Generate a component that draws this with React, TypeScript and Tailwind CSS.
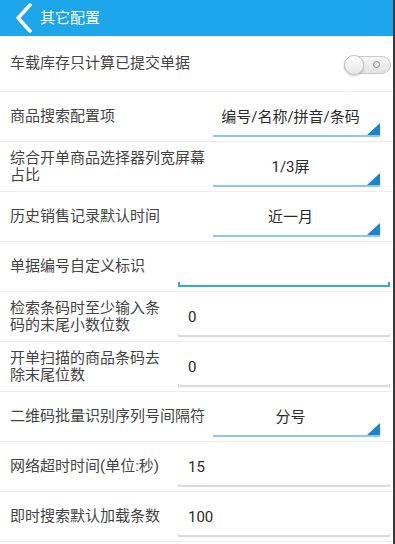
import React from 'react';

const SpinnerRow = ({ label, value }: { label: string; value: string }) => (
  <div className="flex h-[50px] border-b border-[#ececec]">
    <div className="flex w-[213px] items-center pl-[10px] pr-[8px] leading-[17px]">{label}</div>
    <div className="relative flex h-[45px] w-[167px] flex-col border-b-2 border-[#8ccaec]">
      <div className="pr-[12px] pt-[16px] text-center leading-[18px] text-[#2a2a2a]">{value}</div>
      <svg className="absolute bottom-0 right-0" width="13" height="12" viewBox="0 0 13 12">
        <polygon points="13,0 13,12 0,12" fill="#1b84cf" />
      </svg>
    </div>
  </div>
);

const EditRow = ({ label, value, focused }: { label: string; value: string; focused?: boolean }) => (
  <div className="flex h-[50px] border-b border-[#ececec]">
    <div className="flex w-[170px] items-center pl-[10px] leading-[17px]">{label}</div>
    <div className="ml-[8px] flex h-[45px] w-[212px] flex-col">
      <div className="flex-1 pl-[10px] pt-[16px] leading-[18px] text-[#2a2a2a]">{value}</div>
      {focused ? (
        <div className="h-[5px] border-x-2 border-b-2 border-[#35a9da]"></div>
      ) : (
        <div className="h-[3px] border-x border-b-2 border-[#dadada]"></div>
      )}
    </div>
  </div>
);

export default function App() {
  return (
    <div className="h-[544px] w-full overflow-hidden border-r-2 border-[#3a3a3a] bg-white font-['Roboto','Noto_Sans_CJK_SC',sans-serif] text-[15px] text-[#444]">
      {/* Header */}
      <div className="flex h-9 items-center bg-[#1ea6ea]">
        <svg className="ml-[15px]" width="18" height="30" viewBox="0 0 18 30">
          <polyline points="15,2 3,15 15,28" fill="none" stroke="#fff" strokeWidth="3.5" strokeLinecap="round" strokeLinejoin="round" />
        </svg>
        <span className="ml-[7px] text-white">其它配置</span>
      </div>

      {/* Toggle row */}
      <div className="flex h-[56px] items-center justify-between border-b border-[#ececec] pl-[10px] pr-[2px]">
        <span>车载库存只计算已提交单据</span>
        <div className="relative mt-[2px] flex h-[18px] w-[47px] items-center justify-end rounded-full border border-[#c9c9c9] bg-gradient-to-b from-[#f6f6f6] to-[#e2e2e2] pr-[10px]">
          <div className="h-[7px] w-[7px] rounded-full border-[1.5px] border-[#8a8a8a]"></div>
          <div className="absolute left-[-1px] top-[-2px] h-[20px] w-[20px] rounded-full border border-[#c4c4c4] bg-gradient-to-b from-white to-[#e6e6e6] shadow-[0_1px_2px_rgba(0,0,0,0.25)]"></div>
        </div>
      </div>

      <SpinnerRow label="商品搜索配置项" value="编号/名称/拼音/条码" />
      <SpinnerRow label="综合开单商品选择器列宽屏幕占比" value="1/3屏" />
      <SpinnerRow label="历史销售记录默认时间" value="近一月" />
      <EditRow label="单据编号自定义标识" value="" focused />
      <EditRow label="检索条码时至少输入条码的末尾小数位数" value="0" />
      <EditRow label="开单扫描的商品条码去除末尾位数" value="0" />
      <SpinnerRow label="二维码批量识别序列号间隔符" value="分号" />
      <EditRow label="网络超时时间(单位:秒)" value="15" />
      <EditRow label="即时搜索默认加载条数" value="100" />
    </div>
  );
}
